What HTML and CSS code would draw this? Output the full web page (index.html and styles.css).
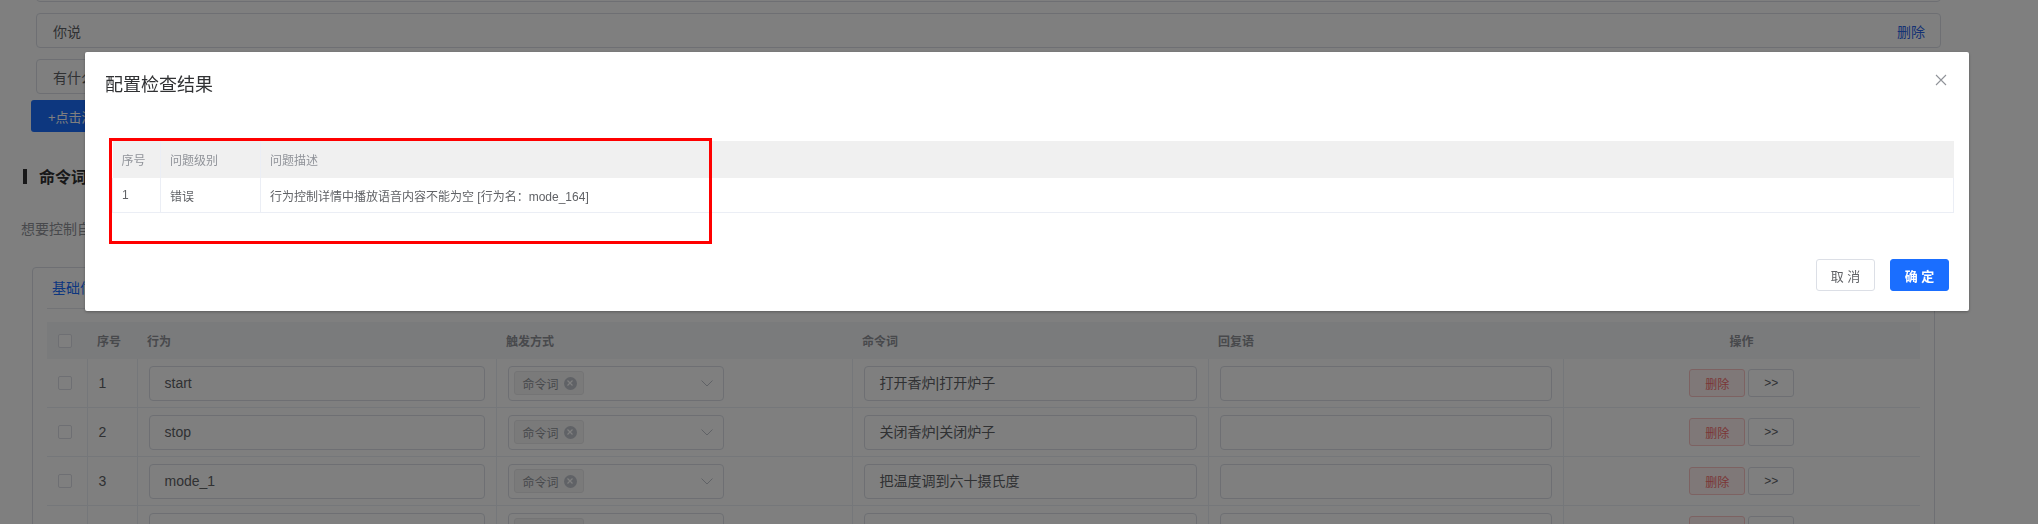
FILE: index.html
```html
<!DOCTYPE html>
<html lang="zh-CN">
  <head>
    <meta charset="UTF-8" />
    <meta name="viewport" content="width=device-width, initial-scale=1.0" />
    <title>配置检查结果</title>
    <link rel="stylesheet" href="styles.css">
  </head>
  <body>
    <div class="page">
      <div class="reply-list">
        <div class="reply-item"></div>
        <div class="reply-item"><span>你说</span><a class="link-del">删除</a></div>
        <div class="reply-item"><span>有什么</span><a class="link-del">删除</a></div>
      </div>
      <button class="btn-add">+点击添加</button>

      <h3 class="section-title">命令词</h3>
      <p class="section-desc">想要控制自己的设备，请添加命令词和回复语</p>

      <div class="card">
        <div class="tabs"><span class="tab active">基础信息</span></div>
        <table class="cmd-table">
          <colgroup>
            <col style="width: 40px">
            <col style="width: 50px">
            <col style="width: 359px">
            <col style="width: 356px">
            <col style="width: 356px">
            <col style="width: 355px">
            <col style="width: 357px">
          </colgroup>
          <thead>
            <tr>
              <th class="col-check"><span class="checkbox"></span></th>
              <th>序号</th>
              <th>行为</th>
              <th>触发方式</th>
              <th>命令词</th>
              <th>回复语</th>
              <th class="col-op">操作</th>
            </tr>
          </thead>
          <tbody>
            <tr>
              <td class="col-check"><span class="checkbox"></span></td>
              <td>1</td>
              <td><div class="input">start</div></td>
              <td>
                <div class="select">
                  <span class="tag">命令词<span class="tag-close"><svg width="8" height="8" viewBox="0 0 8 8"><path d="M1.5 1.5 6.5 6.5M6.5 1.5 1.5 6.5" stroke="#fff" stroke-width="1.2"/></svg></span></span>
                  <svg class="arrow" width="12" height="7" viewBox="0 0 12 7"><polyline points="0.5,0.5 6,6 11.5,0.5" fill="none" stroke="#c0c4cc" stroke-width="1"/></svg>
                </div>
              </td>
              <td><div class="input">打开香炉|打开炉子</div></td>
              <td><div class="input"></div></td>
              <td class="col-op"><button class="btn-del">删除</button><button class="btn-more">&gt;&gt;</button></td>
            </tr>
            <tr>
              <td class="col-check"><span class="checkbox"></span></td>
              <td>2</td>
              <td><div class="input">stop</div></td>
              <td>
                <div class="select">
                  <span class="tag">命令词<span class="tag-close"><svg width="8" height="8" viewBox="0 0 8 8"><path d="M1.5 1.5 6.5 6.5M6.5 1.5 1.5 6.5" stroke="#fff" stroke-width="1.2"/></svg></span></span>
                  <svg class="arrow" width="12" height="7" viewBox="0 0 12 7"><polyline points="0.5,0.5 6,6 11.5,0.5" fill="none" stroke="#c0c4cc" stroke-width="1"/></svg>
                </div>
              </td>
              <td><div class="input">关闭香炉|关闭炉子</div></td>
              <td><div class="input"></div></td>
              <td class="col-op"><button class="btn-del">删除</button><button class="btn-more">&gt;&gt;</button></td>
            </tr>
            <tr>
              <td class="col-check"><span class="checkbox"></span></td>
              <td>3</td>
              <td><div class="input">mode_1</div></td>
              <td>
                <div class="select">
                  <span class="tag">命令词<span class="tag-close"><svg width="8" height="8" viewBox="0 0 8 8"><path d="M1.5 1.5 6.5 6.5M6.5 1.5 1.5 6.5" stroke="#fff" stroke-width="1.2"/></svg></span></span>
                  <svg class="arrow" width="12" height="7" viewBox="0 0 12 7"><polyline points="0.5,0.5 6,6 11.5,0.5" fill="none" stroke="#c0c4cc" stroke-width="1"/></svg>
                </div>
              </td>
              <td><div class="input">把温度调到六十摄氏度</div></td>
              <td><div class="input"></div></td>
              <td class="col-op"><button class="btn-del">删除</button><button class="btn-more">&gt;&gt;</button></td>
            </tr>
            <tr class="row-cut">
              <td class="col-check"></td>
              <td></td>
              <td><div class="input"></div></td>
              <td>
                <div class="select">
                  <span class="tag"></span>
                </div>
              </td>
              <td><div class="input"></div></td>
              <td><div class="input"></div></td>
              <td class="col-op"><button class="btn-del"></button><button class="btn-more"></button></td>
            </tr>
          </tbody>
        </table>
      </div>
    </div>

    <div class="mask"></div>

    <div class="dialog">
      <div class="dialog-header">
        <span class="dialog-title">配置检查结果</span>
        <svg class="dialog-close" width="12" height="12" viewBox="0 0 12 12"><path d="M1 1 11 11M11 1 1 11" stroke="#909399" stroke-width="1.1"/></svg>
      </div>
      <div class="dialog-body">
        <table class="check-table">
          <colgroup>
            <col style="width: 48px">
            <col style="width: 100px">
            <col>
          </colgroup>
          <thead>
            <tr>
              <th>序号</th>
              <th>问题级别</th>
              <th>问题描述</th>
            </tr>
          </thead>
          <tbody>
            <tr>
              <td>1</td>
              <td>错误</td>
              <td>行为控制详情中播放语音内容不能为空 [行为名：mode_164]</td>
            </tr>
          </tbody>
        </table>
      </div>
      <div class="dialog-footer">
        <button class="btn-cancel">取 消</button>
        <button class="btn-ok">确 定</button>
      </div>
      <div class="mark"></div>
    </div>
  </body>
</html>
```

FILE: styles.css
```css
html,
body {
  margin: 0;
  height: 100%;
  overflow: hidden;
}
body {
  background-color: #fff;
  font-family: "Liberation Sans", "Noto Sans CJK SC", sans-serif;
  font-size: 14px;
  color: #606266;
}
button {
  font-family: inherit;
  cursor: pointer;
}

/* page under the mask */
.reply-list {
  display: flex;
  flex-direction: column;
  gap: 11px;
  margin: -33px 97px 0 36px;
}
.reply-item {
  display: flex;
  justify-content: space-between;
  align-items: center;
  height: 35px;
  box-sizing: border-box;
  padding: 0 15px 0 16px;
  border: 1px solid #dcdfe6;
  border-radius: 4px;
}
.link-del {
  color: #2a64e8;
  font-size: 14px;
}
.btn-add {
  display: block;
  margin: 6px 0 0 31px;
  height: 32px;
  padding: 0 17px;
  border: none;
  border-radius: 3px;
  background-color: #1a6eff;
  color: #fff;
  font-size: 13px;
}
.section-title {
  display: flex;
  align-items: center;
  gap: 12px;
  margin: 32px 0 0 23px;
  height: 24px;
  font-size: 16px;
  font-weight: bold;
  color: #303133;
}
.section-title::before {
  content: "";
  width: 4px;
  height: 15px;
  background-color: #303133;
}
.section-desc {
  margin: 31px 0 0 21px;
  line-height: 20px;
  color: #909399;
}
.card {
  margin: 28px 103px 0 32px;
  padding: 0 14px;
  border: 1px solid #dcdfe6;
  border-radius: 4px;
}
.tabs {
  padding: 10px 5px;
  border-bottom: 1px solid #e4e7ed;
  margin-bottom: 13px;
}
.tab {
  line-height: 20px;
  color: #1a6eff;
}
.cmd-table {
  width: 100%;
  table-layout: fixed;
  border-collapse: collapse;
}
.cmd-table th {
  height: 37px;
  padding: 0 10px;
  background-color: #f5f6f8;
  color: #909399;
  font-size: 12px;
  font-weight: bold;
  text-align: left;
}
.cmd-table td {
  height: 48px;
  padding: 0 11px;
  border-right: 1px solid #ebeef5;
  border-bottom: 1px solid #ebeef5;
  color: #606266;
}
.cmd-table td:last-child {
  border-right: none;
}
.cmd-table .col-check {
  padding: 0 0 0 11px;
}
.cmd-table .col-op {
  text-align: center;
}
.checkbox {
  display: block;
  width: 14px;
  height: 14px;
  box-sizing: border-box;
  border: 1px solid #dcdfe6;
  border-radius: 2px;
  background-color: #fff;
}
.input {
  height: 35px;
  box-sizing: border-box;
  padding: 0 15px;
  border: 1px solid #dcdfe6;
  border-radius: 4px;
  line-height: 33px;
  color: #606266;
}
.select {
  display: flex;
  justify-content: space-between;
  align-items: center;
  width: 216px;
  height: 35px;
  box-sizing: border-box;
  padding: 0 10px 0 5px;
  border: 1px solid #dcdfe6;
  border-radius: 4px;
}
.tag {
  display: flex;
  align-items: center;
  gap: 5px;
  height: 24px;
  box-sizing: border-box;
  padding: 0 6px 0 8px;
  border: 1px solid #e9e9eb;
  border-radius: 3px;
  background-color: #f4f4f5;
  color: #909399;
  font-size: 12px;
}
.row-cut .tag {
  width: 70px;
}
.tag-close {
  display: flex;
  align-items: center;
  justify-content: center;
  width: 13px;
  height: 13px;
  border-radius: 50%;
  background-color: #c0c4cc;
}
.btn-del,
.btn-more {
  height: 28px;
  box-sizing: border-box;
  border-radius: 3px;
  font-size: 12px;
  vertical-align: middle;
}
.btn-del {
  width: 56px;
  border: 1px solid #fbc4c4;
  background-color: #fef0f0;
  color: #f56c6c;
}
.btn-more {
  width: 46px;
  margin-left: 3px;
  border: 1px solid #dcdfe6;
  background-color: #fff;
  color: #606266;
}

/* dialog */
.mask {
  position: fixed;
  inset: 0;
  background-color: rgba(0, 0, 0, 0.5);
}
.dialog {
  position: fixed;
  top: 52px;
  left: 85px;
  width: 1884px;
  background-color: #fff;
  border-radius: 2px;
  box-shadow: 0 1px 3px rgba(0, 0, 0, 0.3);
}
.dialog-header {
  padding: 21px 20px 0;
}
.dialog-title {
  display: block;
  line-height: 24px;
  font-size: 18px;
  color: #303133;
}
.dialog-close {
  position: absolute;
  top: 22px;
  right: 22px;
}
.dialog-body {
  padding: 44px 15px 0 27px;
}
.check-table {
  width: 100%;
  table-layout: fixed;
  border-collapse: collapse;
  font-size: 12px;
}
.check-table th {
  height: 37px;
  padding: 0 9px;
  background-color: #f0f0f0;
  border-right: 1px solid #ebeef5;
  color: #909399;
  font-weight: normal;
  text-align: left;
}
.check-table td {
  height: 34px;
  padding: 0 9px;
  border: 1px solid #ebeef5;
  border-top: none;
  color: #606266;
}
.check-table th:last-child {
  border-right: none;
}
.dialog-footer {
  display: flex;
  justify-content: flex-end;
  gap: 15px;
  padding: 46px 20px 20px;
}
.btn-cancel,
.btn-ok {
  width: 59px;
  height: 32px;
  box-sizing: border-box;
  border-radius: 3px;
  font-size: 13px;
}
.btn-cancel {
  border: 1px solid #dcdfe6;
  background-color: #fff;
  color: #606266;
}
.btn-ok {
  border: 1px solid #1a6eff;
  background-color: #1a6eff;
  color: #fff;
  font-weight: bold;
}
.mark {
  position: absolute;
  top: 86px;
  left: 24px;
  width: 603px;
  height: 106px;
  box-sizing: border-box;
  border: 3px solid #ff0000;
}
```
